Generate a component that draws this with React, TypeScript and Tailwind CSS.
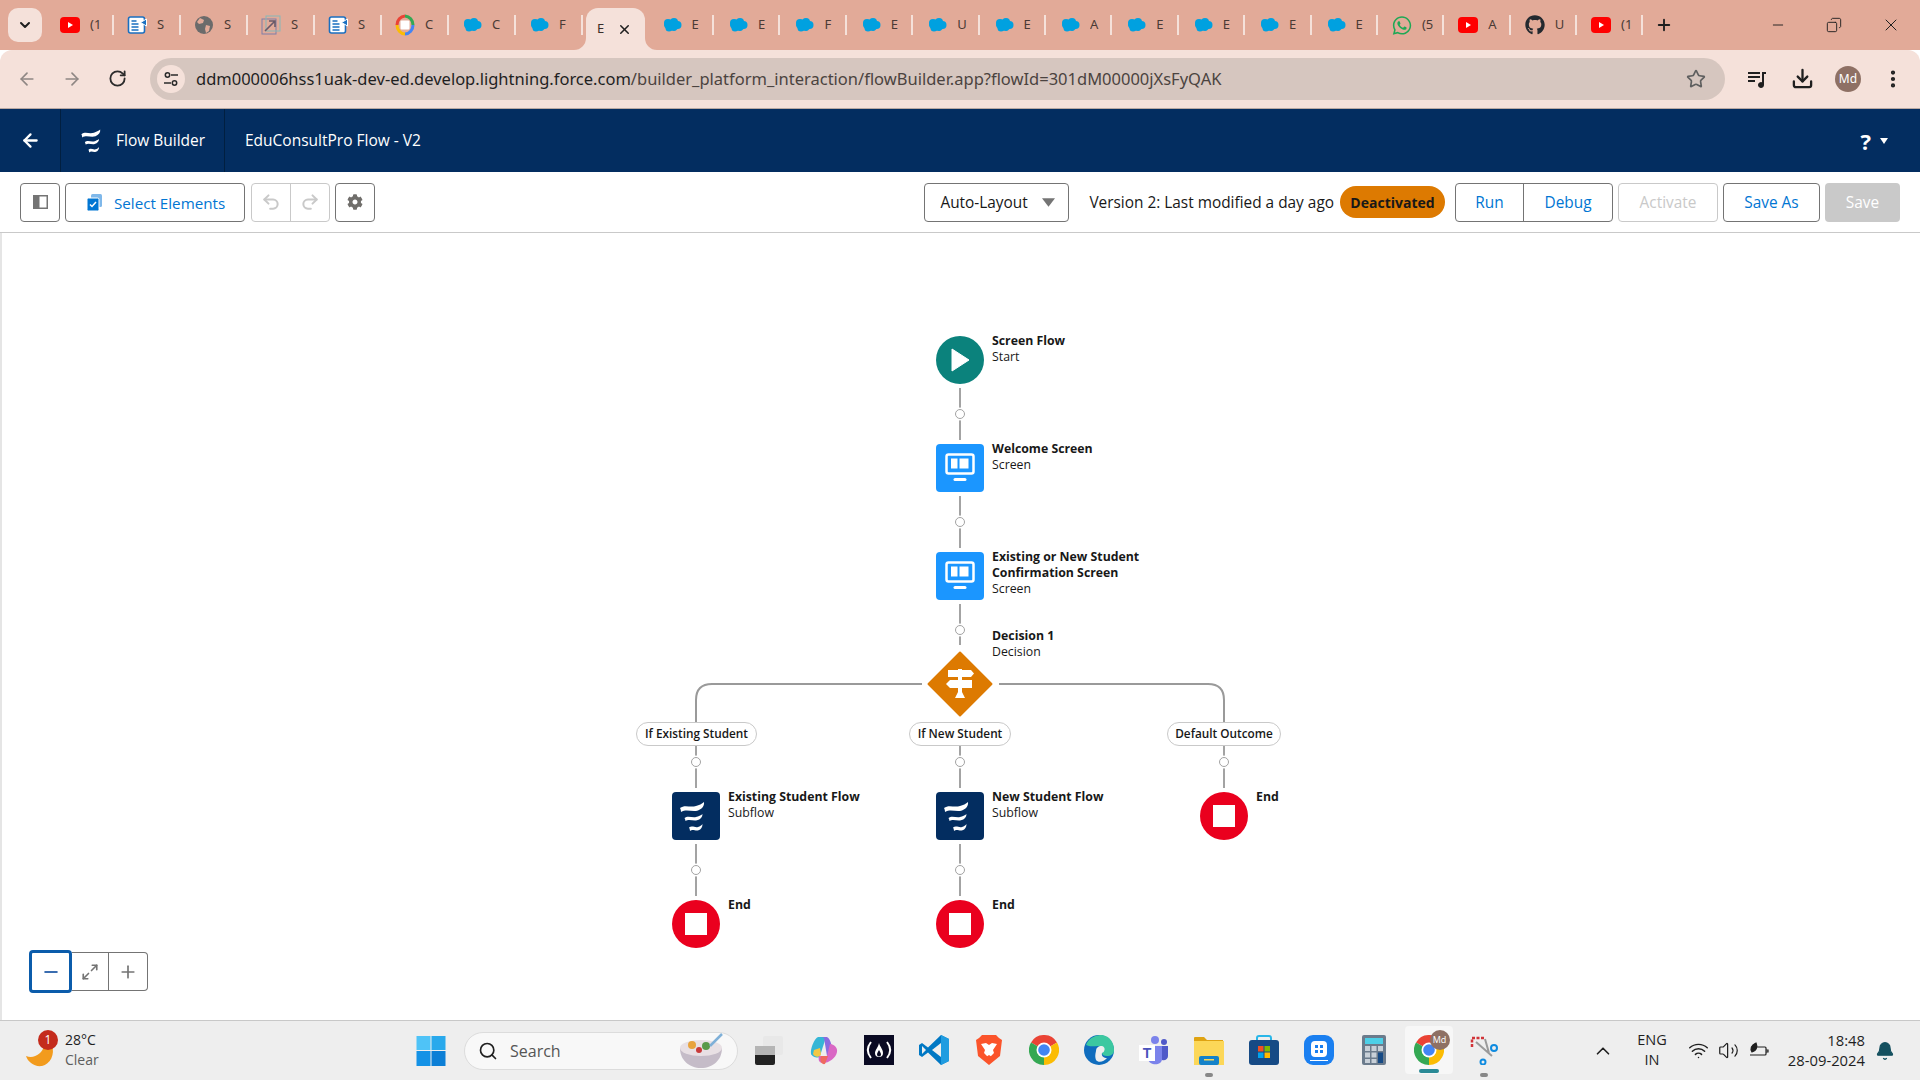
import { ChevronDown, ArrowLeft, ArrowRight, RotateCw, Star, Download, EllipsisVertical, Minus, Plus, X, Search, ChevronUp, Wifi, Volume2, Bell, Undo2, Redo2, Maximize2, Copy } from "lucide-react";
import { FaWhatsapp, FaGithub, FaCog } from "react-icons/fa";

const SF_FONT = "font-['Open_Sans',sans-serif]";

type TabKind = "yt" | "news" | "globe" | "link" | "gchrome" | "sf" | "wa" | "gh";

const leftTabs: { kind: TabKind; label: string }[] = [
  { kind: "yt", label: "(1" },
  { kind: "news", label: "S" },
  { kind: "globe", label: "S" },
  { kind: "link", label: "S" },
  { kind: "news", label: "S" },
  { kind: "gchrome", label: "C" },
  { kind: "sf", label: "C" },
  { kind: "sf", label: "F" },
];

const rightTabs: { kind: TabKind; label: string }[] = [
  { kind: "sf", label: "E" },
  { kind: "sf", label: "E" },
  { kind: "sf", label: "F" },
  { kind: "sf", label: "E" },
  { kind: "sf", label: "U" },
  { kind: "sf", label: "E" },
  { kind: "sf", label: "A" },
  { kind: "sf", label: "E" },
  { kind: "sf", label: "E" },
  { kind: "sf", label: "E" },
  { kind: "sf", label: "E" },
  { kind: "wa", label: "(5" },
  { kind: "yt", label: "A" },
  { kind: "gh", label: "U" },
  { kind: "yt", label: "(1" },
];

function CloudIcon() {
  return (
    <svg width="20" height="20" viewBox="0 0 20 20">
      <g fill="#00a1e0">
        <ellipse cx="10" cy="10" rx="8" ry="5.5" />
        <circle cx="6" cy="8" r="4" />
        <circle cx="12" cy="7" r="4" />
        <circle cx="15.5" cy="10" r="4" />
        <circle cx="7" cy="13" r="3.5" />
        <circle cx="12" cy="13" r="3" />
      </g>
    </svg>
  );
}

function YoutubeIcon() {
  return (
    <svg width="20" height="20" viewBox="0 0 20 20">
      <rect x="0" y="2" width="20" height="16" rx="4" fill="#ff0000" />
      <path d="M8 7l5 3-5 3z" fill="#fff" />
    </svg>
  );
}

function NewsIcon() {
  return (
    <svg width="20" height="20" viewBox="0 0 20 20">
      <rect x="1.5" y="2" width="16" height="16" rx="2" fill="#fff" stroke="#1a6fc0" strokeWidth="1.6" />
      <path d="M4.5 6h5M4.5 9h7M4.5 12h7M4.5 15h7" stroke="#1a6fc0" strokeWidth="1.4" />
      <path d="M19.5 4l-6 3.5 6 3.5z" fill="#1a6fc0" stroke="#fff" />
    </svg>
  );
}

function GlobeIcon() {
  return (
    <svg width="20" height="20" viewBox="0 0 20 20">
      <circle cx="10" cy="10" r="9" fill="#6b6b6b" />
      <path d="M6 3l4 2-1 3-4 1-2-2zM12 10l4 1-1 5-3 2-1-4z" fill="#e2aa98" />
    </svg>
  );
}

function LinkIcon() {
  return (
    <svg width="20" height="20" viewBox="0 0 20 20" fill="none">
      <rect x="1" y="4" width="14" height="15" stroke="#7f7fa8" />
      <rect x="5" y="1" width="14" height="15" stroke="#86b8b8" />
      <path d="M4 16L14 6M8 6h6v6" stroke="#6a5a6a" strokeWidth="1.6" />
    </svg>
  );
}

function GChromeIcon() {
  return (
    <svg width="20" height="22" viewBox="0 0 20 22" fill="none">
      <path d="M10 2A8.5 9 0 0 0 2 11" stroke="#ea4335" strokeWidth="3" />
      <path d="M10 2a8.5 9 0 0 1 8 9" stroke="#34a853" strokeWidth="3" />
      <path d="M18 11a8.5 9 0 0 1-8 9" stroke="#4285f4" strokeWidth="3" />
      <path d="M10 20a8.5 9 0 0 1-8-9" stroke="#fbbc04" strokeWidth="3" />
      <rect x="5.5" y="6.5" width="9" height="9" rx="1" fill="#fff" />
    </svg>
  );
}

function TabIcon({ kind }: { kind: TabKind }) {
  switch (kind) {
    case "yt":
      return <YoutubeIcon />;
    case "news":
      return <NewsIcon />;
    case "globe":
      return <GlobeIcon />;
    case "link":
      return <LinkIcon />;
    case "gchrome":
      return <GChromeIcon />;
    case "wa":
      return <FaWhatsapp size={21} className="text-[#1fa855]" />;
    case "gh":
      return <FaGithub size={20} className="text-[#24292f]" />;
    default:
      return <CloudIcon />;
  }
}

function Tab({ kind, label, wide }: { kind: TabKind; label: string; wide?: boolean }) {
  return (
    <div className={`flex h-[34px] shrink-0 items-center ${wide ? "w-[67px] pl-[13px]" : "w-[66.4px] pl-[14px]"}`}>
      <div className="flex h-5 w-5 shrink-0 items-center justify-center">
        <TabIcon kind={kind} />
      </div>
      <span className="ml-[10px] w-[11px] overflow-hidden whitespace-nowrap font-['Noto_Sans',sans-serif] text-[13px] text-[#4a3a35]">
        {label}
      </span>
      <div className="ml-auto h-[20px] w-[2px] bg-[#f5e1da]" />
    </div>
  );
}

function TabBar() {
  return (
    <div className="flex h-[50px] items-center bg-[#e2aa98] pl-[8px]">
      <div className="flex h-[34px] w-[34px] items-center justify-center rounded-[10px] bg-[#f5e1da]">
        <ChevronDown size={16} strokeWidth={3} className="text-[#1f1f1f]" />
      </div>
      <div className="ml-[5px] flex h-[50px] items-center">
        {leftTabs.map((t, i) => (
          <Tab key={i} kind={t.kind} label={t.label} wide />
        ))}
        <div className="relative ml-[3px] mr-[2.6px] mt-[8px] flex h-[42px] w-[59px] shrink-0 items-center rounded-t-[12px] bg-[#f5e1da] pl-[11px]">
          <svg className="absolute -left-[12px] bottom-0" width="12" height="12" viewBox="0 0 12 12" fill="#f5e1da">
            <path d="M12 0v12H0A12 12 0 0 0 12 0z" />
          </svg>
          <span className="w-[11px] overflow-hidden font-['Noto_Sans',sans-serif] text-[13px] text-[#3a2f2b]">E</span>
          <X size={15} strokeWidth={2.4} className="ml-[9px] text-[#1f1f1f]" />
          <svg className="absolute -right-[12px] bottom-0" width="12" height="12" viewBox="0 0 12 12" fill="#f5e1da">
            <path d="M0 0v12h12A12 12 0 0 1 0 0z" />
          </svg>
        </div>
        {rightTabs.map((t, i) => (
          <Tab key={i} kind={t.kind} label={t.label} />
        ))}
        <Plus size={18} strokeWidth={2.5} className="ml-[12px] text-[#1f1f1f]" />
      </div>
      <div className="ml-auto flex items-center">
        <div className="flex w-[56px] justify-center">
          <Minus size={16} strokeWidth={1.4} className="text-[#1f1f1f]" />
        </div>
        <div className="flex w-[56px] justify-center">
          <Copy size={16} strokeWidth={1.4} className="-scale-x-100 text-[#1f1f1f]" />
        </div>
        <div className="flex w-[58px] justify-center">
          <X size={20} strokeWidth={1.2} className="text-[#1f1f1f]" />
        </div>
      </div>
    </div>
  );
}

function AddressBar() {
  return (
    <div className="flex h-[59px] items-center rounded-t-[12px] border-b border-[#b9a9a3] bg-[#f5e1da] pb-[1px]">
      <div className="flex w-[150px] items-center">
        <ArrowLeft size={20} strokeWidth={2} className="ml-[17px] text-[#8f8784]" />
        <ArrowRight size={20} strokeWidth={2} className="ml-[25px] text-[#8f8784]" />
        <RotateCw size={19} strokeWidth={2.3} className="ml-[26px] text-[#2b2b2b]" />
      </div>
      <div className="flex h-[42px] w-[1575px] items-center rounded-full bg-[#d6c6bf] pl-[7px] pr-[19px]">
        <div className="flex h-7 w-7 items-center justify-center rounded-full bg-[#f5e1da]">
          <svg width="16" height="16" viewBox="0 0 16 16" fill="none" stroke="#2b2b2b" strokeWidth="1.5">
            <circle cx="4.5" cy="4" r="2.2" />
            <path d="M8 4h7M1 12h7" />
            <circle cx="11.5" cy="12" r="2.2" />
          </svg>
        </div>
        <div className="ml-[11px] mt-[2px] font-['Noto_Sans',sans-serif] text-[16.5px] text-[#4b4340]">
          <span className="text-[#1f1f1f]">ddm000006hss1uak-dev-ed.develop.lightning.force.com</span>
          /builder_platform_interaction/flowBuilder.app?flowId=301dM00000jXsFyQAK
        </div>
        <Star size={20} strokeWidth={2} className="ml-auto text-[#5f5f5f]" />
      </div>
      <div className="flex items-center">
        <svg className="ml-[22px]" width="20" height="20" viewBox="0 0 20 20" fill="#1f1f1f">
          <path d="M1 3h12v2H1zM1 7h12v2H1zM1 11h7v2H1zM15 3h4v2h-2v11a3 3 0 1 1-2-2.8z" />
        </svg>
        <Download size={23} strokeWidth={2.4} className="ml-[24px] text-[#1f1f1f]" />
        <div className="ml-[21px] flex h-[26px] w-[26px] items-center justify-center rounded-full bg-[#8e7064] font-['Noto_Sans',sans-serif] text-[12px] text-white">
          Md
        </div>
        <EllipsisVertical size={22} strokeWidth={2.6} className="ml-[21px] text-[#1f1f1f]" />
      </div>
    </div>
  );
}

function WaveIcon({ width, height, viewBox }: { width: number; height: number; viewBox: string }) {
  return (
    <svg width={width} height={height} viewBox={viewBox} fill="#fff">
      <path d="M8 16C13 12 18 16 24 14 27 13 30 12 32 10 32.500 14 30 17 26 18.500 20 20.500 15 16.500 9 20 9 18 8.500 17 8 16z" />
      <path d="M12.500 26C16 23 20 26 24 25 26.500 24.300 29 23.200 30.500 22 30.500 25 28.500 27.500 25 28.300 21 29.300 17 26.500 13.500 29 13.500 28 13 27 12.500 26z" />
      <path d="M17 35.500C20 33 23 36 26 35 28 34.300 29.500 33.500 30.500 32 30.500 35 29 37.500 26.500 38.300 23 39.300 21 36.500 18 39 18 37.500 17.500 36.500 17 35.500z" />
    </svg>
  );
}

function AppHeader() {
  return (
    <div className={`flex h-[63px] items-center bg-[#032d60] text-[15.5px] text-white ${SF_FONT}`}>
      <div className="flex h-full w-[61px] items-center justify-center border-r border-[#011f40]">
        <ArrowLeft size={21} strokeWidth={2.6} />
      </div>
      <div className="flex h-full w-[164px] items-center border-r border-[#011f40] pl-[18px]">
        <WaveIcon width={22} height={26} viewBox="5 8 28 33" />
        <span className="ml-[15px] pt-[1px]">Flow Builder</span>
      </div>
      <span className="ml-[20px] pt-[1px]">EduConsultPro Flow - V2</span>
      <div className="ml-auto flex items-center pr-[32px]">
        <span className="text-[22px] font-bold leading-none">?</span>
        <svg className="ml-[9px]" width="8" height="6" viewBox="0 0 8 6" fill="#fff">
          <path d="M0 0h8L4 6z" />
        </svg>
      </div>
    </div>
  );
}

function Toolbar() {
  return (
    <div className={`flex h-[61px] items-center border-b border-[#c9c9c9] bg-white px-[20px] text-[15.4px] ${SF_FONT}`}>
      <div className="flex h-[39px] w-[40px] items-center justify-center rounded-[4px] border border-[#747474]">
        <svg width="15" height="14" viewBox="0 0 15 14">
          <rect x="0.75" y="0.75" width="13.5" height="12.500" fill="#fff" stroke="#747474" strokeWidth="1.500" />
          <rect x="1" y="1" width="5.500" height="12" fill="#747474" />
        </svg>
      </div>
      <div className="ml-[5px] flex h-[39px] w-[180px] items-center rounded-[4px] border border-[#747474] pl-[20px] text-[#0176d3]">
        <svg width="17" height="18" viewBox="0 0 17 18">
          <rect x="5" y="1" width="11" height="13" rx="1.500" fill="#7fb8ea" />
          <rect x="1" y="5" width="12" height="13" rx="1.500" fill="#0176d3" stroke="#fff" />
          <path d="M4 11.500l2 2 4-4.500" fill="none" stroke="#fff" strokeWidth="1.500" />
        </svg>
        <span className="ml-[11px] pt-[2px] text-[15.2px]">Select Elements</span>
      </div>
      <div className="ml-[6px] flex h-[39px] w-[79px] rounded-[4px] border border-[#c9c9c9] text-[#c9c9c9]">
        <div className="flex w-[39px] items-center justify-center border-r border-[#c9c9c9]">
          <Undo2 size={20} strokeWidth={2.4} />
        </div>
        <div className="flex flex-1 items-center justify-center">
          <Redo2 size={20} strokeWidth={2.4} />
        </div>
      </div>
      <div className="ml-[5px] flex h-[39px] w-[40px] items-center justify-center rounded-[4px] border border-[#747474]">
        <FaCog size={16} className="text-[#706e6b]" />
      </div>

      <div className="ml-auto flex h-[39px] w-[145px] items-center rounded-[4px] border border-[#747474] pl-[15px] text-[#181818]">
        <span className="pt-[2px]">Auto-Layout</span>
        <svg className="ml-[14px]" width="13" height="9" viewBox="0 0 14 9" fill="#747474">
          <path d="M0 0h14L7 9z" />
        </svg>
      </div>
      <span className="ml-[20px] pt-[2px] text-[#181818]">Version 2: Last modified a day ago</span>
      <span className="ml-[6px] flex h-[32px] w-[105px] items-center justify-center rounded-full bg-[#dd7a01] text-[14px] font-bold text-[#181818]">
        Deactivated
      </span>
      <div className="ml-[10px] flex h-[39px] w-[158px] rounded-[4px] border border-[#747474] pt-[2px] text-[#0176d3]">
        <div className="-mt-[2px] flex w-[68px] items-center justify-center border-r border-[#747474] pt-[2px]">Run</div>
        <div className="flex flex-1 items-center justify-center">Debug</div>
      </div>
      <div className="ml-[5px] flex h-[39px] w-[100px] items-center justify-center rounded-[4px] border border-[#c9c9c9] pt-[2px] text-[#c9c9c9]">
        Activate
      </div>
      <div className="ml-[5px] flex h-[39px] w-[97px] items-center justify-center rounded-[4px] border border-[#747474] pt-[2px] text-[#0176d3]">
        Save As
      </div>
      <div className="ml-[5px] flex h-[39px] w-[75px] items-center justify-center rounded-[4px] bg-[#c9c9c9] pt-[2px] text-white">
        Save
      </div>
    </div>
  );
}

function Label({ title, sub }: { title: string[]; sub?: string }) {
  return (
    <div className="-mt-[3px] ml-[8px] text-[12.3px] leading-[16px] text-[#181818]">
      {title.map((t) => (
        <div key={t} className="whitespace-nowrap font-bold">
          {t}
        </div>
      ))}
      {sub && <div>{sub}</div>}
    </div>
  );
}

function ScreenTile() {
  return (
    <div className="flex h-12 w-12 items-center justify-center rounded-[4px] bg-[#1b96ff]">
      <svg width="30" height="30" viewBox="0 0 30 30">
        <rect x="1.500" y="1.500" width="27" height="19" rx="2" fill="none" stroke="#fff" strokeWidth="2.500" />
        <rect x="6" y="5.500" width="6.500" height="10" fill="#fff" />
        <rect x="14.500" y="5.500" width="9" height="10" fill="#fff" />
        <rect x="8.500" y="25" width="13" height="3" rx="1.500" fill="#fff" />
      </svg>
    </div>
  );
}

function SubflowTile() {
  return (
    <div className="h-12 w-12 rounded-[4px] bg-[#032d60]">
      <WaveIcon width={48} height={48} viewBox="0 0 48 48" />
    </div>
  );
}

function StopTile() {
  return (
    <div className="flex h-12 w-12 items-center justify-center rounded-full bg-[#ea001e]">
      <div className="h-[22px] w-[22px] bg-white" />
    </div>
  );
}

function Connectors() {
  const vertical = [
    [960, 388, 440, 414],
    [960, 496, 548, 522],
    [960, 604, 645, 630],
    [696, 745, 788, 762],
    [960, 745, 788, 762],
    [1224, 745, 788, 762],
    [696, 844, 896, 870],
    [960, 844, 896, 870],
  ];
  return (
    <svg className="absolute left-0 top-0 h-[787px] w-[1920px]" viewBox="0 233 1920 787" fill="none">
      <path d="M922 684H712Q696 684 696 700V722" stroke="#9a9a9a" strokeWidth="2" />
      <path d="M999 684H1208Q1224 684 1224 700V722" stroke="#9a9a9a" strokeWidth="2" />
      {vertical.map(([x, y1, y2, cy], i) => (
        <g key={i}>
          <path d={`M${x} ${y1}V${y2}`} stroke="#a3a3a3" strokeWidth="2" />
          <circle cx={x} cy={cy} r="6.500" fill="#fff" />
          <circle cx={x} cy={cy} r="4.500" fill="#fff" stroke="#a3a3a3" />
        </g>
      ))}
    </svg>
  );
}

function Pill({ text, className }: { text: string; className: string }) {
  return (
    <div
      className={`absolute top-[489px] flex h-[24px] items-center justify-center rounded-full border border-[#c9c9c9] bg-white text-[11.8px] font-semibold text-[#181818] ${className}`}
    >
      {text}
    </div>
  );
}

function FlowCanvas() {
  return (
    <div className={`relative flex-1 overflow-hidden border-l-2 border-[#e5e5e5] bg-white ${SF_FONT}`}>
      <div className="absolute -left-[2px] top-0 h-full w-[1920px]">
        <Connectors />

        <div className="absolute left-[936px] top-[103px] flex">
          <div className="flex h-12 w-12 items-center justify-center rounded-full bg-[#0b827c]">
            <svg width="20" height="24" viewBox="0 0 20 24" fill="#fff">
              <path d="M2 1l17 11L2 23z" stroke="#fff" strokeLinejoin="round" />
            </svg>
          </div>
          <Label title={["Screen Flow"]} sub="Start" />
        </div>

        <div className="absolute left-[936px] top-[211px] flex">
          <ScreenTile />
          <Label title={["Welcome Screen"]} sub="Screen" />
        </div>

        <div className="absolute left-[936px] top-[319px] flex">
          <ScreenTile />
          <Label title={["Existing or New Student", "Confirmation Screen"]} sub="Screen" />
        </div>

        <div className="absolute left-[984px] top-[398px] flex">
          <Label title={["Decision 1"]} sub="Decision" />
        </div>

        <svg className="absolute left-[927px] top-[418px]" width="66" height="66" viewBox="0 0 66 66">
          <path d="M33 1.500L64.500 33 33 64.500 1.500 33z" fill="#dd7a01" stroke="#dd7a01" strokeWidth="2" strokeLinejoin="round" />
          <path d="M21 19h10v-1h4v1h9l3 3.500-3 3.500H21zM31 26h4v3h-4zM23 29h22v8H23l-4-4zM31 37h4v4h-4zM31 41h4l3 6H28z" fill="#fff" />
        </svg>

        <Pill text="If Existing Student" className="left-[636px] w-[121px]" />
        <Pill text="If New Student" className="left-[909px] w-[102px]" />
        <Pill text="Default Outcome" className="left-[1167px] w-[114px]" />

        <div className="absolute left-[672px] top-[559px] flex">
          <SubflowTile />
          <Label title={["Existing Student Flow"]} sub="Subflow" />
        </div>
        <div className="absolute left-[936px] top-[559px] flex">
          <SubflowTile />
          <Label title={["New Student Flow"]} sub="Subflow" />
        </div>
        <div className="absolute left-[1200px] top-[559px] flex">
          <StopTile />
          <Label title={["End"]} />
        </div>
        <div className="absolute left-[672px] top-[667px] flex">
          <StopTile />
          <Label title={["End"]} />
        </div>
        <div className="absolute left-[936px] top-[667px] flex">
          <StopTile />
          <Label title={["End"]} />
        </div>

        <div className="absolute left-[29px] top-[717px] flex h-[43px] items-center">
          <div className="flex h-[43px] w-[43px] items-center justify-center rounded-[4px] border-[3px] border-[#0b5cab] bg-white">
            <Minus size={20} strokeWidth={2.4} className="text-[#3a6db0]" />
          </div>
          <div className="flex h-[39px] w-[37px] items-center justify-center border-y border-r border-[#747474]">
            <Maximize2 size={18} strokeWidth={2.2} className="text-[#747474]" />
          </div>
          <div className="flex h-[39px] w-[39px] items-center justify-center rounded-r-[4px] border-y border-r border-[#747474]">
            <Plus size={20} strokeWidth={2} className="text-[#747474]" />
          </div>
        </div>
      </div>
    </div>
  );
}

function WinLogo() {
  return (
    <svg width="30" height="30" viewBox="0 0 30 30">
      <rect x="0.500" y="0" width="14" height="14" fill="#4fc3f7" />
      <rect x="15.500" y="0" width="14" height="14" fill="#29a9ec" />
      <rect x="0.500" y="15" width="14" height="15" fill="#1492e6" />
      <rect x="15.500" y="15" width="14" height="15" fill="#0c7fd6" />
    </svg>
  );
}

function ChromeIcon() {
  return (
    <svg width="30" height="30" viewBox="0 0 30 30">
      <path d="M15 15L2 7.500A15 15 0 0 1 28 7.500z" fill="#ea4335" />
      <path d="M15 15l13-7.500A15 15 0 0 1 15 30z" fill="#fbbc04" />
      <path d="M15 15v15A15 15 0 0 1 2 7.500z" fill="#34a853" />
      <circle cx="15" cy="15" r="7.500" fill="#fff" />
      <circle cx="15" cy="15" r="5.800" fill="#4285f4" />
    </svg>
  );
}

function TaskIcons() {
  return (
    <div className="flex items-center">
      {/* task view */}
      <div className="flex h-[40px] w-[55px] items-center justify-center">
        <svg width="30" height="30" viewBox="0 0 30 30">
          <rect x="1" y="11" width="20" height="19" rx="2" fill="#222" />
          <rect x="9" y="1" width="20" height="19" rx="2" fill="#e8e8e8" />
          <rect x="1" y="11" width="20" height="9" fill="#b5b5b5" />
        </svg>
      </div>
      {/* copilot */}
      <div className="flex h-[40px] w-[55px] items-center justify-center">
        <svg width="30" height="30" viewBox="0 0 30 30">
          <path d="M9 2h8l-6 19c-1 3-8 1-9-2-1-5 3-15 7-17z" fill="#35b6d6" />
          <path d="M5 15l6-2 1 6c0 3-6 4-8 0z" fill="#f2c744" />
          <path d="M13 2h5c4 2 6 12 5 17l-5 2-3-18z" fill="#8a6be0" />
          <path d="M21 9c4 0 8 4 7 8-1 6-8 11-14 11-4 0-5-3-4-7h8z" fill="#d967c4" />
          <path d="M12 21h7l-3 8c-3 1-6-3-4-8z" fill="#ee6a5f" />
        </svg>
      </div>
      {/* freeCodeCamp */}
      <div className="flex h-[40px] w-[55px] items-center justify-center">
        <div className="flex h-[30px] w-[30px] items-center justify-center bg-[#0a0a23]">
          <svg width="26" height="24" viewBox="0 0 26 24" fill="none" stroke="#fff" strokeWidth="2">
            <path d="M5 4C1 9 1 15 5 20M21 4c4 5 4 11 0 16" />
            <path d="M13 5c1 4 4 6 4 10a4 4 0 0 1-8 0c0-3 3-5 4-10z" fill="#fff" stroke="none" />
            <path d="M13 12c1 2 2 3 2 4.500a2 2 0 0 1-4 0c0-1.500 1-2.500 2-4.500z" fill="#0a0a23" stroke="none" />
          </svg>
        </div>
      </div>
      {/* vscode */}
      <div className="flex h-[40px] w-[55px] items-center justify-center">
        <svg width="30" height="30" viewBox="0 0 30 30">
          <path d="M22 0l8 4v22l-8 4-13-12.500L3 22l-3-2v-10l3-2 6 4.500z" fill="#0078c4" />
          <path d="M22 0l8 4v22l-8 4z" fill="#1f9ce0" />
          <path d="M22 8L13 15l9 7z" fill="#eeeeee" />
          <path d="M3 11l4 4-4 4z" fill="#eeeeee" />
        </svg>
      </div>
      {/* brave */}
      <div className="flex h-[40px] w-[55px] items-center justify-center">
        <svg width="26" height="30" viewBox="0 0 26 30">
          <path d="M6 0h14l3 3 3 2-2 16-11 9-11-9L0 5l3-2z" fill="#fb542b" />
          <path d="M5 9l5-1 3 2 3-2 5 1-4 6 1 3-5 5-5-5 1-3z" fill="#fff" />
          <path d="M10 22l3-2 3 2-3 2z" fill="#fb542b" />
        </svg>
      </div>
      {/* chrome */}
      <div className="flex h-[40px] w-[55px] items-center justify-center">
        <ChromeIcon />
      </div>
      {/* edge */}
      <div className="flex h-[40px] w-[55px] items-center justify-center">
        <svg width="30" height="30" viewBox="0 0 30 30">
          <circle cx="15" cy="15" r="15" fill="#0f6cbd" />
          <path d="M2 10C5 2 13 0 18 0c8 1 12 8 12 15 0 4-3 6-7 6-3 0-5-1-5-3 2-1 2-7-4-7-4 0-8 1-12-1z" fill="#3cc8a0" />
          <path d="M12 16c0-3 2-5 6-5 4 1 3 6 0 7-1 3 2 5 5 5-3 4-9 5-11 2-1-3-1-5 0-9z" fill="#eeeeee" />
        </svg>
      </div>
      {/* teams */}
      <div className="flex h-[40px] w-[55px] items-center justify-center">
        <svg width="30" height="30" viewBox="0 0 30 30">
          <circle cx="16" cy="5" r="4" fill="#7b83eb" />
          <circle cx="25" cy="7" r="3" fill="#5059c9" />
          <path d="M20 11h9v10c0 3-3 5-6 4z" fill="#5059c9" />
          <path d="M8 11h15v13c0 7-13 7-14 0z" fill="#7b83eb" />
          <rect x="0" y="10" width="16" height="16" fill="#fff" />
          <text x="8" y="23" textAnchor="middle" fontSize="14" fontWeight="700" fill="#4b53bc" fontFamily="'Liberation Sans',sans-serif">
            T
          </text>
        </svg>
      </div>
      {/* files */}
      <div className="relative flex h-[40px] w-[55px] items-center justify-center">
        <svg width="30" height="30" viewBox="0 0 30 30">
          <path d="M0 3a1 1 0 0 1 1-1h9l3 3h16v4H0z" fill="#dfa312" />
          <rect x="0" y="6" width="30" height="24" fill="#fcd758" />
          <rect x="5" y="21" width="20" height="9" rx="2" fill="#1482c9" />
          <rect x="10" y="24" width="10" height="1.500" fill="#fcd758" />
        </svg>
        <div className="absolute -bottom-[7px] h-[4px] w-[8px] rounded-full bg-[#888]" />
      </div>
      {/* store */}
      <div className="flex h-[40px] w-[55px] items-center justify-center">
        <svg width="30" height="30" viewBox="0 0 30 30">
          <path d="M8 6V3a2 2 0 0 1 2-2h10a2 2 0 0 1 2 2v3" fill="none" stroke="#29b6e8" strokeWidth="2" />
          <rect x="0" y="5" width="30" height="25" rx="3" fill="#164a85" />
          <rect x="9" y="11" width="5.500" height="5.500" fill="#f25022" />
          <rect x="15.500" y="11" width="5.500" height="5.500" fill="#7fba00" />
          <rect x="9" y="17.500" width="5.500" height="5.500" fill="#00a4ef" />
          <rect x="15.500" y="17.500" width="5.500" height="5.500" fill="#ffb900" />
        </svg>
      </div>
      {/* phone link style app */}
      <div className="flex h-[40px] w-[55px] items-center justify-center">
        <div className="flex h-[30px] w-[30px] flex-col items-center justify-center rounded-[9px] bg-[#1a7ff0]">
          <div className="mt-[1px] grid grid-cols-2 gap-[2px] rounded-[4px] bg-white p-[4px]">
            <div className="h-[3px] w-[3px] bg-[#1a7ff0]" />
            <div className="h-[3px] w-[3px] bg-[#1a7ff0]" />
            <div className="h-[3px] w-[3px] bg-[#1a7ff0]" />
            <div className="h-[3px] w-[3px] bg-[#1a7ff0]" />
          </div>
          <div className="mt-[3px] h-[1px] w-[18px] bg-white" />
        </div>
      </div>
      {/* calculator */}
      <div className="flex h-[40px] w-[55px] items-center justify-center">
        <svg width="24" height="30" viewBox="0 0 24 30">
          <rect width="24" height="30" rx="2" fill="#6b7b8c" />
          <rect x="3" y="3" width="18" height="6" fill="#4dd0e8" />
          <path d="M3 11h5v5H3zM9.500 11h5v5h-5zM16 11h5v5h-5zM3 17.500h5v5H3zM9.500 17.500h5v5h-5zM3 24h5v4H3zM9.500 24h5v4h-5z" fill="#c8d0d8" />
          <rect x="16" y="17.500" width="5" height="10.500" fill="#164a85" />
        </svg>
      </div>
      {/* chrome, active */}
      <div className="relative mx-[3.5px] flex h-[48px] w-[48px] items-center justify-center rounded-[4px] bg-[#f7f7f7]">
        <ChromeIcon />
        <div className="absolute right-[3px] top-[4px] flex h-[20px] w-[20px] items-center justify-center rounded-full bg-[#8e7064] text-[9px] text-white">
          Md
        </div>
        <div className="absolute bottom-[1px] h-[4px] w-[20px] rounded-full bg-[#2a8a96]" />
      </div>
      {/* snipping tool */}
      <div className="relative flex h-[40px] w-[55px] items-center justify-center">
        <svg width="30" height="30" viewBox="0 0 30 30" fill="none">
          <path d="M3 12V3h12" stroke="#d13438" strokeWidth="2.500" strokeDasharray="3 1.500" />
          <path d="M7 7l16 14M16 4l4 14" stroke="#9a9a9a" strokeWidth="2" />
          <circle cx="25" cy="13" r="3" stroke="#0f8be0" strokeWidth="2" />
          <circle cx="14" cy="27" r="2.500" stroke="#0f8be0" strokeWidth="2" />
        </svg>
        <div className="absolute -bottom-[7px] h-[4px] w-[8px] rounded-full bg-[#888]" />
      </div>
    </div>
  );
}

function Taskbar() {
  return (
    <div className="flex h-[60px] items-center border-t border-[#c8c8c8] bg-[#eeeeee] font-['Open_Sans',sans-serif] text-[#1f1f1f]">
      <div className="relative ml-[26px] flex w-[40px] items-center">
        <svg width="28" height="34" viewBox="0 0 28 34">
          <path d="M26 12a14 15 0 0 1-10 20C8 33 2 28 0 22c8 3 16-2 18-10z" fill="#f29b1d" />
        </svg>
        <div className="absolute left-[12px] -top-[4px] flex h-5 w-5 items-center justify-center rounded-full bg-[#c42b1c] text-[12px] text-white">
          1
        </div>
      </div>
      <div className="-ml-[1px] -mt-[2px] w-[80px] text-[14px] leading-[20px]">
        <div>28°C</div>
        <div className="text-[#5d5d5d]">Clear</div>
      </div>
      <div className="ml-[271px]">
        <WinLogo />
      </div>
      <div className="ml-[18px] flex h-[38px] w-[274px] items-center rounded-full border border-[#dcdcdc] bg-[#f8f8f8] pl-[13px] pr-[13px]">
        <Search size={20} strokeWidth={2} className="text-[#1f1f1f]" />
        <span className="ml-[12px] text-[16px] text-[#555]">Search</span>
        <svg className="ml-auto" width="46" height="38" viewBox="0 0 46 38">
          <path d="M2 16h42c0 12-9 20-21 20S2 28 2 16z" fill="#c5bcc8" />
          <ellipse cx="23" cy="16" rx="21" ry="8" fill="#e8e0e4" />
          <circle cx="14" cy="13" r="4" fill="#e8a33d" />
          <circle cx="21" cy="18" r="3" fill="#c93a3a" />
          <circle cx="28" cy="14" r="4" fill="#5a9a4a" />
          <path d="M32 14L44 2" stroke="#7fb0d8" strokeWidth="2.500" />
        </svg>
      </div>
      <div className="-mt-[1px] ml-[3px]">
        <TaskIcons />
      </div>
      <div className="ml-auto flex items-center pr-[25px]">
        <ChevronUp size={22} strokeWidth={1.8} />
        <div className="ml-[23px] -mt-[1px] text-center text-[14.5px] leading-[20px]">
          <div>ENG</div>
          <div>IN</div>
        </div>
        <Wifi size={21} strokeWidth={1.7} className="ml-[21px]" />
        <Volume2 size={21} strokeWidth={1.4} className="ml-[9px]" />
        <svg className="ml-[9px]" width="21" height="18" viewBox="0 0 21 18" fill="none" stroke="#1f1f1f" strokeWidth="1.200">
          <path d="M5 5h12a1 1 0 0 1 1 1v6a1 1 0 0 1-1 1H2M18 8h2v2h-2" />
          <path d="M8 1C3 3 2 7 4 10c4-1 6-5 4-9z" fill="#1f1f1f" />
        </svg>
        <div className="ml-[19px] -mt-[2px] text-right text-[14.8px] leading-[20px]">
          <div>18:48</div>
          <div>28-09-2024</div>
        </div>
        <Bell size={20} fill="#14505f" strokeWidth={1.5} className="ml-[10px] text-[#14505f]" />
      </div>
    </div>
  );
}

export default function App() {
  return (
    <div className="flex h-[1080px] w-[1920px] flex-col overflow-hidden bg-white">
      <TabBar />
      <AddressBar />
      <AppHeader />
      <Toolbar />
      <FlowCanvas />
      <Taskbar />
    </div>
  );
}
